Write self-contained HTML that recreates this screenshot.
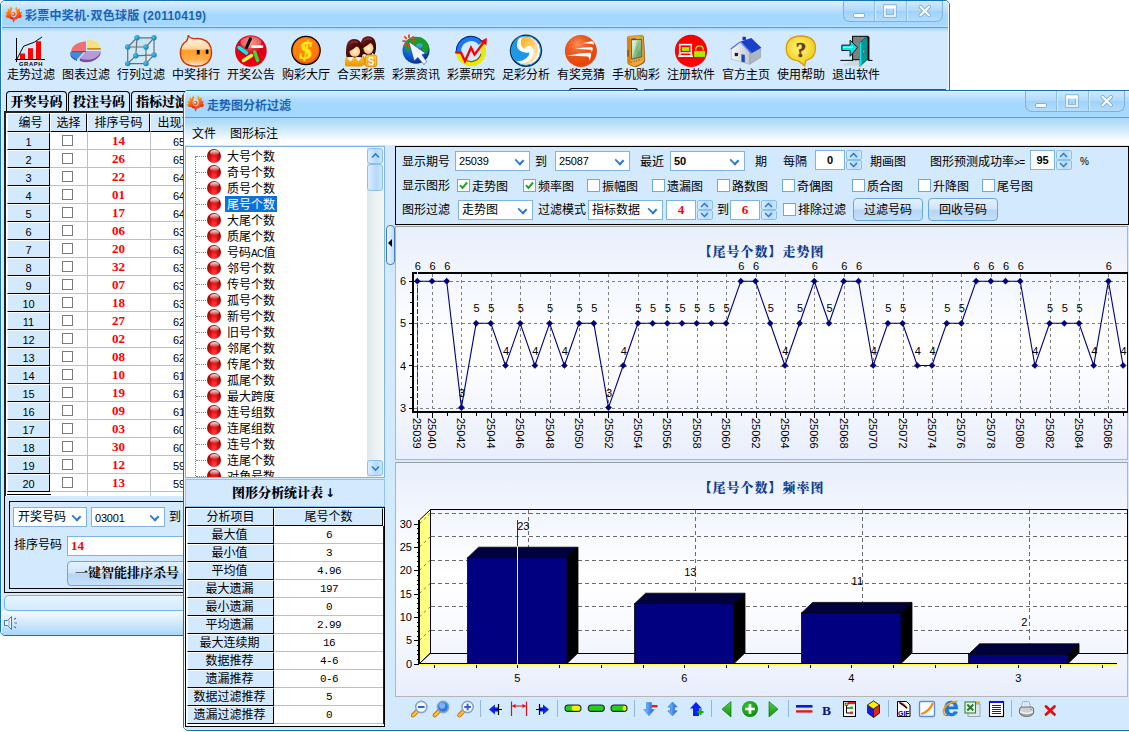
<!DOCTYPE html>
<html lang="zh-CN"><head><meta charset="utf-8"><title>彩票中奖机</title>
<style>
html,body{margin:0;padding:0}
body{width:1129px;height:732px;overflow:hidden;position:relative;background:#fff;
 font-family:"Liberation Sans","Noto Sans CJK SC",sans-serif;font-size:12px;color:#000;line-height:1}
.a{position:absolute}
.t{position:absolute;white-space:nowrap;line-height:14px;height:14px}
.c{text-align:center}
.mono{font-family:"Liberation Mono","Noto Sans CJK SC",monospace}
.serif{font-family:"Liberation Serif","Noto Serif CJK SC",serif}
/* windows */
#w1{box-shadow:inset 1px 0 0 #fff,inset -1px 0 0 #fff;left:0;top:0;width:948px;height:634px;border:1px solid #1672b0;border-radius:5px 5px 5px 5px;background:#d3e9fd;overflow:hidden}
#w1 .tb{left:0;top:0;width:948px;height:26px;background:linear-gradient(#fff 0,#fff 1px,#d8edfe 1px,#b4dcfd 11px,#a5d8fd 14px,#a5d8fd 24px,#b4e0fd 25px,#b4e0fd 26px);border-bottom:1px solid #5a9fdc}
#w1 .tb2{left:0;top:27px;width:948px;height:4px;background:linear-gradient(#9fd6fc,#d3e9fd)}
#w2{box-shadow:inset 1px 0 0 #fff;left:183px;top:90px;width:960px;height:639px;border:1px solid #1672b0;border-radius:5px 5px 5px 5px;background:#d3e9fd;overflow:hidden}
#w2 .tb{left:0;top:0;width:960px;height:26px;background:linear-gradient(#fff 0,#fff 1px,#d4ebfe 1px,#b0dbfd 9px,#a5d8fd 12px,#a5d8fd 100%);border-bottom:1px solid #5a9fdc}
#w2 .mb{left:0;top:27px;width:960px;height:27px;background:linear-gradient(#a8dafc 0,#b2dcf6 15%,#d8ecfb 50%,#fbfdff 85%,#fdfeff 100%)}
.ttl{font-weight:bold;color:#1a63b5;font-size:13px}
.cap{border:1px solid #7fb2dd;border-top:none;border-radius:0 0 7px 7px;background:linear-gradient(#d4eafd,#b0dafc 50%,#a0d2fa 55%,#b4dcfc)}
.tab{border:1px solid #000;border-bottom:none;border-radius:4px 4px 0 0;box-sizing:border-box;background:#d3e9fd}
.hd{background:#d3e9fd;box-sizing:border-box;border-top:1px solid #fff;border-left:1px solid #fff;border-right:1px solid #000;border-bottom:1px solid #000}
.gl{background:#c0c0c0}
.cb{width:11px;height:11px;box-sizing:border-box;border:1px solid #7b7b7b;background:#fff}
.combo{box-sizing:border-box;border:1px solid #7eb4e2;background:#fff}
.combo:after{content:"";position:absolute;right:6px;top:5px;width:5px;height:5px;border-right:2px solid #2a7ad0;border-bottom:2px solid #2a7ad0;transform:rotate(45deg) scale(1.1,0.9);transform-origin:center}
.btn{box-sizing:border-box;border:1px solid #6aa7da;border-radius:4px;background:linear-gradient(#e4f1fd 0,#d2e7fb 45%,#b5d6f5 55%,#c6e0f8 100%)}
.ball{width:14px;height:14px;border-radius:50%;background:radial-gradient(ellipse at 50% 88%,#ff4a4a 0,#ee1a1a 30%,#b00a0a 62%,#7a0000 100%)}
.ball:after{content:"";position:absolute;left:2.5px;top:0.8px;width:9px;height:5px;border-radius:50%;background:linear-gradient(rgba(255,255,255,.9),rgba(255,200,200,.15))}
.sbb{box-sizing:border-box;border:1px solid #86c1f0;border-radius:3px;background:linear-gradient(90deg,#dcedfd,#b6d9f8 60%,#cfe6fb)}
.cb2{width:13px;height:13px;box-sizing:border-box;border:1px solid #6fa9dc;background:#fff}
.nb:after{display:none}

</style></head>
<body>
<div id="w1" class="a">
<div class="tb a"></div><div class="tb2 a"></div>
<svg class="a" style="left:4px;top:5px" width="18" height="17" viewBox="0 0 17 16"><defs><linearGradient id="lga" x1="0" y1="0" x2="0.5" y2="1"><stop offset="0" stop-color="#ffd21a"/><stop offset="0.45" stop-color="#ff7a10"/><stop offset="1" stop-color="#ee1208"/></linearGradient><linearGradient id="lha" x1="1" y1="0" x2="0.5" y2="1"><stop offset="0" stop-color="#ffd21a"/><stop offset="0.45" stop-color="#ff7a10"/><stop offset="1" stop-color="#ee1208"/></linearGradient></defs><path d="M8.2 15.6 L7.2 12.8 L5.4 12.6 L3.8 11.4 L1.8 11.4 L0 9.2 L1.6 8.4 L0.4 5.4 L2.2 6 L2.8 1.8 L4.3 3.4 L5.6 0.4 L7 2.6 L5.9 4.2 L5.2 7.4 L6 9.6 L8 10.8 L9 13.5z" fill="url(#lga)"/><path d="M8.2 15.6 L7.2 12.8 L5.4 12.6 L3.8 11.4 L1.8 11.4 L0 9.2 L1.6 8.4 L0.4 5.4 L2.2 6 L2.8 1.8 L4.3 3.4 L5.6 0.4 L7 2.6 L5.9 4.2 L5.2 7.4 L6 9.6 L8 10.8 L9 13.5z" fill="url(#lha)" transform="translate(16.4,0) scale(-1,1)"/><circle cx="8" cy="7.6" r="2" fill="#f8501a"/><circle cx="7.6" cy="7.2" r="0.9" fill="#fff2e0"/></svg>
<div class="t ttl" style="left:24px;top:8px;font-size:12px;letter-spacing:0.25px">彩票中奖机·双色球版 (20110419)</div>
<div class="a cap" style="left:842px;top:-1px;width:98px;height:21px"></div><div class="a" style="left:873px;top:0px;width:1px;height:20px;background:#8fbfe6"></div><div class="a" style="left:874px;top:0px;width:1px;height:20px;background:#d9ecfd"></div><div class="a" style="left:905px;top:0px;width:1px;height:20px;background:#8fbfe6"></div><div class="a" style="left:906px;top:0px;width:1px;height:20px;background:#d9ecfd"></div><svg class="a" style="left:842px;top:-1px" width="98" height="21" viewBox="0 0 98 21"><rect x="10.5" y="13.5" width="11" height="4" rx="1.5" fill="#fff" stroke="#7fb0dc" stroke-width="1"/><rect x="42" y="6" width="10" height="10" fill="none" stroke="#7fb0dc" stroke-width="3.4"/><rect x="42" y="6" width="10" height="10" fill="none" stroke="#fff" stroke-width="1.6"/><path d="M41.2 7.3 H52.8" stroke="#fff" stroke-width="2.6"/><path d="M77.5 6.8 L86 15.2 M86 6.8 L77.5 15.2" stroke="#7fb0dc" stroke-width="4" stroke-linecap="round"/><path d="M77.5 6.8 L86 15.2 M86 6.8 L77.5 15.2" stroke="#fff" stroke-width="2.1" stroke-linecap="round"/></svg>
<div class="t" style="left:6px;top:67px;width:48px">走势过滤</div>
<div class="t" style="left:61px;top:67px;width:48px">图表过滤</div>
<div class="t" style="left:116px;top:67px;width:48px">行列过滤</div>
<div class="t" style="left:171px;top:67px;width:48px">中奖排行</div>
<div class="t" style="left:226px;top:67px;width:48px">开奖公告</div>
<div class="t" style="left:281px;top:67px;width:48px">购彩大厅</div>
<div class="t" style="left:336px;top:67px;width:48px">合买彩票</div>
<div class="t" style="left:391px;top:67px;width:48px">彩票资讯</div>
<div class="t" style="left:446px;top:67px;width:48px">彩票研究</div>
<div class="t" style="left:501px;top:67px;width:48px">足彩分析</div>
<div class="t" style="left:556px;top:67px;width:48px">有奖竞猜</div>
<div class="t" style="left:611px;top:67px;width:48px">手机购彩</div>
<div class="t" style="left:666px;top:67px;width:48px">注册软件</div>
<div class="t" style="left:721px;top:67px;width:48px">官方主页</div>
<div class="t" style="left:776px;top:67px;width:48px">使用帮助</div>
<div class="t" style="left:831px;top:67px;width:48px">退出软件</div>
<svg class="a" style="left:-1px;top:29px" width="949" height="40" viewBox="0 30 949 40">
<defs><radialGradient id="g5" cx="0.5" cy="0.25" r="0.8"><stop offset="0" stop-color="#f08070"/><stop offset="0.45" stop-color="#d80020"/><stop offset="1" stop-color="#f00000"/></radialGradient><radialGradient id="g6" cx="0.45" cy="0.4" r="0.65"><stop offset="0" stop-color="#ff9a10"/><stop offset="0.7" stop-color="#ff7000"/><stop offset="1" stop-color="#e03800"/></radialGradient><linearGradient id="g4" x1="0" y1="0" x2="0" y2="1"><stop offset="0" stop-color="#fff4e6"/><stop offset="0.42" stop-color="#ffd9a8"/><stop offset="0.5" stop-color="#ff9a20"/><stop offset="0.8" stop-color="#ffb050"/><stop offset="1" stop-color="#fff0e0"/></linearGradient><radialGradient id="gn" cx="0.35" cy="0.35" r="0.7"><stop offset="0" stop-color="#4fc0ee"/><stop offset="1" stop-color="#0a7fb8"/></radialGradient><radialGradient id="g8" cx="0.35" cy="0.3" r="0.8"><stop offset="0" stop-color="#3a90f0"/><stop offset="0.6" stop-color="#0a55c8"/><stop offset="1" stop-color="#062a78"/></radialGradient><radialGradient id="g11" cx="0.4" cy="0.3" r="0.8"><stop offset="0" stop-color="#f89060"/><stop offset="0.35" stop-color="#ee5a20"/><stop offset="0.8" stop-color="#e64408"/><stop offset="1" stop-color="#ec5818"/></radialGradient><radialGradient id="g15" cx="0.45" cy="0.4" r="0.7"><stop offset="0" stop-color="#fff27a"/><stop offset="0.7" stop-color="#f2d428"/><stop offset="1" stop-color="#e8b818"/></radialGradient><radialGradient id="gf" cx="0.5" cy="0.5" r="0.6"><stop offset="0" stop-color="#fff6e0"/><stop offset="1" stop-color="#ffb860"/></radialGradient><linearGradient id="gh" x1="0" y1="0" x2="1" y2="1"><stop offset="0" stop-color="#7a2020"/><stop offset="0.5" stop-color="#4a0c0c"/><stop offset="1" stop-color="#2a0404"/></linearGradient><linearGradient id="gb" x1="0" y1="0" x2="0" y2="1"><stop offset="0" stop-color="#ffc020"/><stop offset="1" stop-color="#e89000"/></linearGradient><linearGradient id="g10" x1="0" y1="0" x2="1" y2="1"><stop offset="0" stop-color="#ffb010"/><stop offset="1" stop-color="#fff0d8"/></linearGradient><linearGradient id="gs" x1="0" y1="0" x2="1" y2="1"><stop offset="0" stop-color="#c8ecc8"/><stop offset="1" stop-color="#5a9a5a"/></linearGradient><linearGradient id="gw" x1="0" y1="0" x2="1" y2="0"><stop offset="0" stop-color="#f6f8fa"/><stop offset="1" stop-color="#c2c8d0"/></linearGradient></defs>
<g><path d="M20 53.5h5v6h-5z M28 48.3h5v11.2h-5z M36 41.2h5v18.3h-5z" fill="#f00"/><path d="M16.5 38 V62 M15 59.5 H45" stroke="#000" stroke-width="1" fill="none" shape-rendering="crispEdges"/><path d="M17 59 L23.6 46.2 L34.3 42.2 L42 37" stroke="#000" stroke-width="1" fill="none"/><text x="31" y="66" text-anchor="middle" font-family="Liberation Sans, sans-serif" font-weight="bold" font-size="5.8" letter-spacing="0.65">GRAPH</text></g>
<g><path d="M80 61 Q88 64 95 60 Q101 56 100.5 53 L100.5 51 L86.5 51.5 L79.5 59z" fill="#7a4aa8"/><path d="M86.5 51 L100.5 51 Q100 56 94 58.5 Q88 61 80 58.5z" fill="#b89ad8"/><path d="M70.2 52 L84 51.8 L77 59.5 Q71 57 70.2 52z" fill="#3a8ae8"/><path d="M70.2 52 Q70.5 56 77 59.5 L77 61 Q70 58 70.2 53.5z" fill="#1a5ab8"/><path d="M86 41.2 L86 51 L71.2 51 Q72 43 86 41.2z" fill="#f07070"/><path d="M71.2 51 L86 51 L86 52.3 L71.4 52.3z" fill="#c03838"/><path d="M87.2 39.3 L87.2 48 L100.8 48 Q99 40 87.2 39.3z" fill="#f8e080"/><path d="M87.2 48 L100.8 48 L100.8 49.8 L87.2 49.8z" fill="#c88820"/></g>
<g><polygon points="127.7,47 146,47 146,63.6 127.7,63.6" fill="#c8e8f4" fill-opacity="0.75"/><polygon points="137,37.8 154,37.8 146,47 127.7,47" fill="#c0e4f0" fill-opacity="0.8"/><polygon points="146,47 154,37.8 154,54.9 146,63.6" fill="#d4eef8" fill-opacity="0.8"/>
<path d="M127.7 47.0 L146.0 47.0 M146.0 47.0 L146.0 63.6 M146.0 63.6 L127.7 63.6 M127.7 63.6 L127.7 47.0 M137.0 37.8 L154.0 37.8 M154.0 37.8 L154.0 54.9 M154.0 54.9 L135.8 55.8 M135.8 55.8 L137.0 37.8 M127.7 47.0 L137.0 37.8 M146.0 47.0 L154.0 37.8 M146.0 63.6 L154.0 54.9 M127.7 63.6 L135.8 55.8" stroke="#6e6e6e" stroke-width="1.2" fill="none"/>
<circle cx="137.0" cy="37.8" r="2.7" fill="url(#gn)"/>
<circle cx="154.0" cy="37.8" r="2.7" fill="url(#gn)"/>
<circle cx="154.0" cy="54.9" r="2.7" fill="url(#gn)"/>
<circle cx="135.8" cy="55.8" r="2.7" fill="url(#gn)"/>
<circle cx="127.7" cy="47.0" r="2.7" fill="url(#gn)"/>
<circle cx="146.0" cy="47.0" r="2.7" fill="url(#gn)"/>
<circle cx="146.0" cy="63.6" r="2.7" fill="url(#gn)"/>
<circle cx="127.7" cy="63.6" r="2.7" fill="url(#gn)"/>
</g>
<g><path d="M188.2 35.3 Q189.8 38.6 194.5 38.8 Q198 38 201.5 39 Q211.6 41.8 211.6 52.5 Q211 66 196 66.2 Q180.5 66 180.4 52.5 Q180.6 44.5 186.6 41 Q188.2 38.6 188.2 35.3z" fill="url(#g4)" stroke="#cc3604" stroke-width="1.4"/><rect x="196.8" y="50" width="2.8" height="4.4" fill="#000"/><rect x="205.8" y="49.6" width="2.6" height="4.2" fill="#000"/></g>
<g><circle cx="250.9" cy="51" r="15.8" fill="url(#g5)"/><ellipse cx="251" cy="42.5" rx="10.5" ry="5.5" fill="#ffb0a0" fill-opacity="0.45"/><path d="M246.5 47.5 L250.4 38.8" stroke="#000" stroke-width="3" stroke-linecap="round"/><path d="M252.5 46.6 L262 46.6" stroke="#fff" stroke-width="2.6" stroke-linecap="round"/><path d="M239 47.5 L246.5 53" stroke="#00f0f0" stroke-width="3.5" stroke-linecap="round"/><path d="M243.5 60.5 L251.5 55.5" stroke="#f8f840" stroke-width="3.4" stroke-linecap="round"/><path d="M254.8 52.2 L257.6 60.4" stroke="#30e030" stroke-width="3.4" stroke-linecap="round"/></g>
<g><circle cx="306" cy="50.5" r="14.2" fill="url(#g6)" stroke="#000" stroke-width="1.2"/><circle cx="306" cy="50.5" r="11.2" fill="none" stroke="#ff9a30" stroke-width="0.7"/><text x="306" y="59.2" text-anchor="middle" font-family="Liberation Serif, serif" font-weight="bold" font-style="italic" font-size="25" fill="#ffe818" stroke="#ffe818" stroke-width="0.5">$</text></g>
<g><path d="M360.2 50 Q359.8 36.4 368 36.2 Q376.4 36.4 376 48 Q375.8 52 374.4 54.8 L361.5 54.8 Q360.3 52.5 360.2 50z" fill="url(#gh)"/><rect x="362.4" y="55.5" width="4" height="9.5" fill="#f09a08"/><path d="M362.8 54.2 L365.6 54.6 L365.4 58.6z M372.4 53 L374.4 54.8 L371.6 55z" fill="#fff"/><ellipse cx="368.4" cy="48.3" rx="5" ry="5.7" fill="url(#gf)"/><path d="M362.2 48.4 Q367.5 46.4 372.6 40.6 Q374.6 43.5 374.8 49.5 L375.8 49.5 Q376.3 38 368 37 Q361.5 38 362.2 48.4z" fill="url(#gh)"/><path d="M364 40.5 Q368 37.5 372 39.5" stroke="#9a3030" stroke-width="1.4" fill="none" stroke-opacity="0.8"/><path d="M346 53 Q345.6 39.2 354 39 Q362.6 39.2 362.6 51 Q362.4 55.5 361.8 58 L346.8 58 Q346.1 55.5 346 53z" fill="url(#gh)"/><ellipse cx="354.8" cy="51.4" rx="5.3" ry="5.4" fill="url(#gf)"/><path d="M348.4 51.6 Q354 49.4 359.2 43.4 Q361.2 46.5 361.4 52.5 L362.4 52.5 Q362.8 41 354 40 Q347.5 41 348.4 51.6z" fill="url(#gh)"/><path d="M350 43.5 Q354 40.5 358 42.5" stroke="#9a3030" stroke-width="1.4" fill="none" stroke-opacity="0.8"/><path d="M344.9 60 Q344.9 57.6 348 57.6 L360.5 57.6 Q363.4 57.6 363.4 60 L363.4 64.3 Q363.4 66.6 360.8 66.6 L347.6 66.6 Q344.9 66.6 344.9 64.3z" fill="url(#gb)"/><path d="M346.9 57.2 L354 57.2 L350.4 61.6z M355.2 57.2 L361.8 57.2 L358.4 61.3z" fill="#fff"/><rect x="365.4" y="55.1" width="11.4" height="11.6" rx="2.2" fill="url(#gb)" stroke="#e68a00" stroke-width="0.8"/><rect x="366.6" y="56.3" width="9" height="9.2" rx="1.4" fill="none" stroke="#ffd858" stroke-width="0.7"/><text x="371.1" y="65" text-anchor="middle" font-family="Liberation Sans, sans-serif" font-weight="bold" font-size="10" fill="#f4fbff">S</text></g>
<g><circle cx="416" cy="50.2" r="13.5" fill="url(#g8)"/><path d="M404.2 45.5 Q405.5 40 411 37.8 Q416 36.2 421 37.5 Q427 40 429 46.5 Q428.8 51 426.5 54.5 Q423 52.5 421.5 48.5 Q418 46.5 414 47 Q410 48 408.8 52 Q405.5 51 404.2 45.5z" fill="#1c9c24"/><ellipse cx="419.5" cy="45.5" rx="3.2" ry="2.2" fill="#38a8f4" fill-opacity="0.85"/><path d="M412.2 41.1 L415.6 41.1 M411.3 43.4 L413.7 45.8 M409.0 44.3 L409.0 47.7 M406.7 43.4 L404.3 45.8 M405.8 41.1 L402.4 41.1 M406.7 38.8 L404.3 36.4 M409.0 37.9 L409.0 34.5 M411.3 38.8 L413.7 36.4" stroke="#ff3a12" stroke-width="1.8" fill="none"/><path d="M408.7 41.6 L425.6 53.3 L422 54.8 L426.6 61.6 L424 64.7 L417.8 57.4 L414.2 61z" fill="#eef4ff" stroke="#20409a" stroke-width="0.6"/></g>
<g><path d="M458.5 51.2 A12.5 12.5 0 0 1 480.9 43.5" fill="none" stroke="#1a78f0" stroke-width="5.2"/><path d="M456.2 50.7 A14.8 14.8 0 0 1 482.0 41.3" fill="none" stroke="#0a2a80" stroke-width="1.1"/><path d="M480.9 43.5 A12.5 12.5 0 1 1 458.5 51.2" fill="none" stroke="#ece808" stroke-width="5.2"/><path d="M480.9 53.8 A10.2 10.2 0 0 1 465.1 59.6" fill="none" stroke="#6a6a00" stroke-width="1.2"/><path d="M455.2 52.3 L460.9 52.5 L465 61.2 L471 47.8 L474.6 54.6 L484.2 41.6" fill="none" stroke="#f80000" stroke-width="2.4" stroke-linejoin="miter"/><path d="M486.9 38 L486.4 45.4 L480.6 41z" fill="#f80000"/></g>
<g><circle cx="526" cy="50.7" r="15.4" fill="#fff" stroke="#0c3060" stroke-width="1.6"/><circle cx="526" cy="50.7" r="14.5" fill="none" stroke="#2a9ae8" stroke-width="1"/><path d="M521 35.8 A15.2 15.2 0 0 0 515.9 60.8 Q524 62.4 529 55 L529 52.4 Q521.6 53.6 517.9 48.6 Q515 42.4 521 35.8z" fill="#1a9ae6"/><path d="M521.6 38.8 Q523.5 36.8 526 36.6 A14.2 14.2 0 0 1 529 64 Q525 64.8 520.5 63.9 Q530.4 62.6 533.5 54.8 Q535 49 530.9 46.5 Q526.8 45 524.2 49.1 Q520.6 46.5 520.8 42.4 Q520.8 40 521.6 38.8z" fill="url(#g10)"/></g>
<g><circle cx="580.9" cy="51" r="16" fill="url(#g11)"/><path d="M582.3 43.3 Q588 41.8 592.1 41.3 Q593.6 41.6 593.7 42.8 Q593.9 44 593.4 45.2 Q593 43.9 591.6 43.8 Q587 43.6 582.3 43.3z M575 48.7 Q584 47 591.6 47 Q592.8 47.4 592.7 48.8 Q592.6 50.6 591.6 52.4 Q591.6 50 590.4 49.7 Q583 49 575 48.7z M567 55.7 Q580 53 590.1 52.8 Q591.3 53.4 591.1 55 Q590.8 58 589.3 61 Q589.4 57.2 587.8 56.5 Q578 56 567 55.7z" fill="#fff"/></g>
<g><path d="M628.2 38 L643.8 36.2 L645.2 60.8 Q645 63 641.8 64.6 L636.6 66.9 Q635 67.2 633.6 66.6 L629.2 64.8z" fill="#4a2c06" fill-opacity="0.75"/><path d="M627.4 37.2 Q627.4 36.6 628.5 36.4 L642 35.2 Q643.2 35.2 643.3 36.4 L644.4 60.5 Q644.2 62.4 641 64 L636 66.2 Q634.5 66.6 633 66 L628.6 64.2 Q627.7 63.8 627.7 62.8z" fill="#f6a62c" stroke="#b86a08" stroke-width="0.6"/><path d="M627.4 37.2 L630.3 38 L630.5 64.6 L628.6 64.2 Q627.7 63.8 627.7 62.8z" fill="#de7e0c"/><path d="M628 50 V56.5" stroke="#5a3806" stroke-width="1"/><path d="M631.3 39.8 L641.7 39.3 L641.7 56.9 L631.6 59.2z" fill="url(#gs)" stroke="#3c4c30" stroke-width="0.8"/><path d="M639.6 39.6 L635.2 51.4 L641.5 50.6 V56.6 L635.8 58z" fill="#5f9f64" fill-opacity="0.5"/><path d="M632 40.4 L636.8 40.2 L633 56 L632.2 58.4z" fill="#f0fff0" fill-opacity="0.5"/><path d="M631.3 39.2 L635.8 38.9" stroke="#1c1cb0" stroke-width="0.9"/><rect x="639.8" y="36.2" width="2" height="1.1" fill="#30e030"/><path d="M630.8 62.4 L641.6 59.4" stroke="#7a6a90" stroke-width="1.3" stroke-dasharray="1.4,1.3"/></g>
<g><circle cx="691" cy="50.9" r="16.1" fill="#f00"/><rect x="679.7" y="44.6" width="11.6" height="8.4" fill="none" stroke="#fff" stroke-width="1.5"/><rect x="681.9" y="47" width="7.3" height="3.9" fill="#a4f000"/><path d="M679 53.3 H692 L693 56.9 H678z" fill="#fff"/><path d="M681.4 53.4 H689.6 L690.8 55 H680.2z" fill="#f00"/><rect x="694.1" y="50.9" width="10.9" height="6" fill="#a4f000"/><path d="M695.6 50.6 Q695.6 45.8 699.5 45.8 Q703.4 45.8 703.4 50.6" fill="none" stroke="#a4f000" stroke-width="1.3"/></g>
<g><path d="M740.1 42.2 L731.3 49.4 L731.3 59.2 L749.9 64.3 L749.9 53.4z" fill="url(#gw)" stroke="#98a0ac" stroke-width="0.5"/><path d="M749.9 53.4 L760.6 48.5 L760.6 57.5 L749.9 64.3z" fill="#aeb6c0" stroke="#8890a0" stroke-width="0.5"/><rect x="742.5" y="36.8" width="3.4" height="3.4" fill="#1838b0"/><path d="M751.3 38 L761.4 47.8 L750.6 53.8 L739.8 41.8z" fill="#1840c8"/><path d="M740 41.2 L730.2 48.6 L731 49.8 L740.4 42.6 L750.3 53.6 L751 52.6z" fill="#2a52d8" stroke="#e8ecf4" stroke-width="0.5"/><rect x="734.3" y="52.7" width="3.9" height="3.6" fill="#181c24" stroke="#f4f4f4" stroke-width="0.6"/><path d="M741.1 53.8 L745.2 54.8 L745.2 63 L741.1 61.9z" fill="#1a4aa8" stroke="#f0f0f0" stroke-width="0.5"/></g>
<g><path d="M800.9 36 Q815.5 36.4 815.5 48.4 Q815.3 58 806 60.4 L804.6 65.8 L798.5 60.9 Q786.4 59.5 786.3 48.4 Q786.5 36.4 800.9 36z" fill="url(#g15)" stroke="#d89c10" stroke-width="1.3"/><text x="801" y="56.8" text-anchor="middle" font-family="Liberation Serif, serif" font-weight="bold" font-size="21" fill="#683a10" stroke="#683a10" stroke-width="0.5">?</text></g>
<g><path d="M842 65 l12 -5 h14 l-10 6z" fill="#c8c8c8" fill-opacity="0.55"/><path d="M840.4 60.4 H853 M868.2 60.4 H872.5" stroke="#000" stroke-width="1"/><rect x="852.6" y="36.3" width="15.6" height="23.4" fill="#808080" stroke="#000" stroke-width="1"/><path d="M868.6 37 V60" stroke="#000" stroke-width="1.6"/><path d="M859.9 42.4 L867.4 36.4 L867.4 59.4 L859.9 66.4z" fill="#009a9a" stroke="#003838" stroke-width="0.6"/><path d="M860.4 42.4 V66" stroke="#00f0f0" stroke-width="1.6"/><ellipse cx="863.9" cy="51.7" rx="0.9" ry="1.4" fill="#fff" stroke="#000" stroke-width="0.5"/><path d="M841.8 45.1 H850.1 V40.2 L857.4 47.6 L850.1 56.3 V50.5 H841.8z" fill="#00e8e8" stroke="#000" stroke-width="0.9"/><path d="M843.5 47.4 H853" stroke="#c8ffff" stroke-width="1.2"/></g>
</svg>
<div class="a" style="left:568px;top:87px;width:69px;height:8px;border:1px solid #000;border-bottom:none;border-radius:3px 3px 0 0;box-sizing:border-box"></div>
<div class="a" style="left:643px;top:88px;width:302px;height:1px;background:#0a7a1e"></div>
<div class="a tab" style="left:5px;top:90px;width:61px;height:21px"></div>
<div class="t serif" style="left:5px;top:94px;width:61px;text-align:center;font-weight:900;font-size:13px">开奖号码</div>
<div class="a tab" style="left:67px;top:90px;width:62px;height:21px"></div>
<div class="t serif" style="left:67px;top:94px;width:62px;text-align:center;font-weight:900;font-size:13px">投注号码</div>
<div class="a tab" style="left:130px;top:90px;width:62px;height:21px"></div>
<div class="t serif" style="left:130px;top:94px;width:62px;text-align:center;font-weight:900;font-size:13px">指标过滤</div>
<div class="a" style="left:3px;top:110px;width:600px;height:385px;background:#fff;border-left:2px solid #222;border-top:2px solid #222"></div>
<div class="a hd" style="left:6px;top:112px;width:43px;height:19px"></div>
<div class="t c" style="left:8px;top:115px;width:43px">编号</div>
<div class="a hd" style="left:49px;top:112px;width:37px;height:19px"></div>
<div class="t c" style="left:49px;top:115px;width:37px">选择</div>
<div class="a hd" style="left:86px;top:112px;width:63px;height:19px"></div>
<div class="t c" style="left:86px;top:115px;width:63px">排序号码</div>
<div class="a hd" style="left:149px;top:112px;width:63px;height:19px"></div>
<div class="t c" style="left:149px;top:115px;width:63px">出现次数</div>
<div class="a hd" style="left:6px;top:131px;width:43px;height:18px"></div>
<div class="t c" style="left:6px;top:134px;width:43px;font-size:11px">1</div>
<div class="a gl" style="left:49px;top:148px;width:560px;height:1px"></div>
<div class="a cb" style="left:61px;top:134px"></div>
<div class="t c serif" style="left:86px;top:133px;width:63px;color:#f00;font-weight:bold;font-size:13px">14</div>
<div class="t" style="left:172px;top:134px;font-size:11px">65</div>
<div class="a hd" style="left:6px;top:149px;width:43px;height:18px"></div>
<div class="t c" style="left:6px;top:152px;width:43px;font-size:11px">2</div>
<div class="a gl" style="left:49px;top:166px;width:560px;height:1px"></div>
<div class="a cb" style="left:61px;top:152px"></div>
<div class="t c serif" style="left:86px;top:151px;width:63px;color:#f00;font-weight:bold;font-size:13px">26</div>
<div class="t" style="left:172px;top:152px;font-size:11px">65</div>
<div class="a hd" style="left:6px;top:167px;width:43px;height:18px"></div>
<div class="t c" style="left:6px;top:170px;width:43px;font-size:11px">3</div>
<div class="a gl" style="left:49px;top:184px;width:560px;height:1px"></div>
<div class="a cb" style="left:61px;top:170px"></div>
<div class="t c serif" style="left:86px;top:169px;width:63px;color:#f00;font-weight:bold;font-size:13px">22</div>
<div class="t" style="left:172px;top:170px;font-size:11px">64</div>
<div class="a hd" style="left:6px;top:185px;width:43px;height:18px"></div>
<div class="t c" style="left:6px;top:188px;width:43px;font-size:11px">4</div>
<div class="a gl" style="left:49px;top:202px;width:560px;height:1px"></div>
<div class="a cb" style="left:61px;top:188px"></div>
<div class="t c serif" style="left:86px;top:187px;width:63px;color:#f00;font-weight:bold;font-size:13px">01</div>
<div class="t" style="left:172px;top:188px;font-size:11px">64</div>
<div class="a hd" style="left:6px;top:203px;width:43px;height:18px"></div>
<div class="t c" style="left:6px;top:206px;width:43px;font-size:11px">5</div>
<div class="a gl" style="left:49px;top:220px;width:560px;height:1px"></div>
<div class="a cb" style="left:61px;top:206px"></div>
<div class="t c serif" style="left:86px;top:205px;width:63px;color:#f00;font-weight:bold;font-size:13px">17</div>
<div class="t" style="left:172px;top:206px;font-size:11px">64</div>
<div class="a hd" style="left:6px;top:221px;width:43px;height:18px"></div>
<div class="t c" style="left:6px;top:224px;width:43px;font-size:11px">6</div>
<div class="a gl" style="left:49px;top:238px;width:560px;height:1px"></div>
<div class="a cb" style="left:61px;top:224px"></div>
<div class="t c serif" style="left:86px;top:223px;width:63px;color:#f00;font-weight:bold;font-size:13px">06</div>
<div class="t" style="left:172px;top:224px;font-size:11px">63</div>
<div class="a hd" style="left:6px;top:239px;width:43px;height:18px"></div>
<div class="t c" style="left:6px;top:242px;width:43px;font-size:11px">7</div>
<div class="a gl" style="left:49px;top:256px;width:560px;height:1px"></div>
<div class="a cb" style="left:61px;top:242px"></div>
<div class="t c serif" style="left:86px;top:241px;width:63px;color:#f00;font-weight:bold;font-size:13px">20</div>
<div class="t" style="left:172px;top:242px;font-size:11px">63</div>
<div class="a hd" style="left:6px;top:257px;width:43px;height:18px"></div>
<div class="t c" style="left:6px;top:260px;width:43px;font-size:11px">8</div>
<div class="a gl" style="left:49px;top:274px;width:560px;height:1px"></div>
<div class="a cb" style="left:61px;top:260px"></div>
<div class="t c serif" style="left:86px;top:259px;width:63px;color:#f00;font-weight:bold;font-size:13px">32</div>
<div class="t" style="left:172px;top:260px;font-size:11px">63</div>
<div class="a hd" style="left:6px;top:275px;width:43px;height:18px"></div>
<div class="t c" style="left:6px;top:278px;width:43px;font-size:11px">9</div>
<div class="a gl" style="left:49px;top:292px;width:560px;height:1px"></div>
<div class="a cb" style="left:61px;top:278px"></div>
<div class="t c serif" style="left:86px;top:277px;width:63px;color:#f00;font-weight:bold;font-size:13px">07</div>
<div class="t" style="left:172px;top:278px;font-size:11px">63</div>
<div class="a hd" style="left:6px;top:293px;width:43px;height:18px"></div>
<div class="t c" style="left:6px;top:296px;width:43px;font-size:11px">10</div>
<div class="a gl" style="left:49px;top:310px;width:560px;height:1px"></div>
<div class="a cb" style="left:61px;top:296px"></div>
<div class="t c serif" style="left:86px;top:295px;width:63px;color:#f00;font-weight:bold;font-size:13px">18</div>
<div class="t" style="left:172px;top:296px;font-size:11px">63</div>
<div class="a hd" style="left:6px;top:311px;width:43px;height:18px"></div>
<div class="t c" style="left:6px;top:314px;width:43px;font-size:11px">11</div>
<div class="a gl" style="left:49px;top:328px;width:560px;height:1px"></div>
<div class="a cb" style="left:61px;top:314px"></div>
<div class="t c serif" style="left:86px;top:313px;width:63px;color:#f00;font-weight:bold;font-size:13px">27</div>
<div class="t" style="left:172px;top:314px;font-size:11px">62</div>
<div class="a hd" style="left:6px;top:329px;width:43px;height:18px"></div>
<div class="t c" style="left:6px;top:332px;width:43px;font-size:11px">12</div>
<div class="a gl" style="left:49px;top:346px;width:560px;height:1px"></div>
<div class="a cb" style="left:61px;top:332px"></div>
<div class="t c serif" style="left:86px;top:331px;width:63px;color:#f00;font-weight:bold;font-size:13px">02</div>
<div class="t" style="left:172px;top:332px;font-size:11px">62</div>
<div class="a hd" style="left:6px;top:347px;width:43px;height:18px"></div>
<div class="t c" style="left:6px;top:350px;width:43px;font-size:11px">13</div>
<div class="a gl" style="left:49px;top:364px;width:560px;height:1px"></div>
<div class="a cb" style="left:61px;top:350px"></div>
<div class="t c serif" style="left:86px;top:349px;width:63px;color:#f00;font-weight:bold;font-size:13px">08</div>
<div class="t" style="left:172px;top:350px;font-size:11px">62</div>
<div class="a hd" style="left:6px;top:365px;width:43px;height:18px"></div>
<div class="t c" style="left:6px;top:368px;width:43px;font-size:11px">14</div>
<div class="a gl" style="left:49px;top:382px;width:560px;height:1px"></div>
<div class="a cb" style="left:61px;top:368px"></div>
<div class="t c serif" style="left:86px;top:367px;width:63px;color:#f00;font-weight:bold;font-size:13px">10</div>
<div class="t" style="left:172px;top:368px;font-size:11px">61</div>
<div class="a hd" style="left:6px;top:383px;width:43px;height:18px"></div>
<div class="t c" style="left:6px;top:386px;width:43px;font-size:11px">15</div>
<div class="a gl" style="left:49px;top:400px;width:560px;height:1px"></div>
<div class="a cb" style="left:61px;top:386px"></div>
<div class="t c serif" style="left:86px;top:385px;width:63px;color:#f00;font-weight:bold;font-size:13px">19</div>
<div class="t" style="left:172px;top:386px;font-size:11px">61</div>
<div class="a hd" style="left:6px;top:401px;width:43px;height:18px"></div>
<div class="t c" style="left:6px;top:404px;width:43px;font-size:11px">16</div>
<div class="a gl" style="left:49px;top:418px;width:560px;height:1px"></div>
<div class="a cb" style="left:61px;top:404px"></div>
<div class="t c serif" style="left:86px;top:403px;width:63px;color:#f00;font-weight:bold;font-size:13px">09</div>
<div class="t" style="left:172px;top:404px;font-size:11px">61</div>
<div class="a hd" style="left:6px;top:419px;width:43px;height:18px"></div>
<div class="t c" style="left:6px;top:422px;width:43px;font-size:11px">17</div>
<div class="a gl" style="left:49px;top:436px;width:560px;height:1px"></div>
<div class="a cb" style="left:61px;top:422px"></div>
<div class="t c serif" style="left:86px;top:421px;width:63px;color:#f00;font-weight:bold;font-size:13px">03</div>
<div class="t" style="left:172px;top:422px;font-size:11px">60</div>
<div class="a hd" style="left:6px;top:437px;width:43px;height:18px"></div>
<div class="t c" style="left:6px;top:440px;width:43px;font-size:11px">18</div>
<div class="a gl" style="left:49px;top:454px;width:560px;height:1px"></div>
<div class="a cb" style="left:61px;top:440px"></div>
<div class="t c serif" style="left:86px;top:439px;width:63px;color:#f00;font-weight:bold;font-size:13px">30</div>
<div class="t" style="left:172px;top:440px;font-size:11px">60</div>
<div class="a hd" style="left:6px;top:455px;width:43px;height:18px"></div>
<div class="t c" style="left:6px;top:458px;width:43px;font-size:11px">19</div>
<div class="a gl" style="left:49px;top:472px;width:560px;height:1px"></div>
<div class="a cb" style="left:61px;top:458px"></div>
<div class="t c serif" style="left:86px;top:457px;width:63px;color:#f00;font-weight:bold;font-size:13px">12</div>
<div class="t" style="left:172px;top:458px;font-size:11px">59</div>
<div class="a hd" style="left:6px;top:473px;width:43px;height:18px"></div>
<div class="t c" style="left:6px;top:476px;width:43px;font-size:11px">20</div>
<div class="a gl" style="left:49px;top:490px;width:560px;height:1px"></div>
<div class="a cb" style="left:61px;top:476px"></div>
<div class="t c serif" style="left:86px;top:475px;width:63px;color:#f00;font-weight:bold;font-size:13px">13</div>
<div class="t" style="left:172px;top:476px;font-size:11px">59</div>
<div class="a gl" style="left:86px;top:131px;width:1px;height:364px"></div>
<div class="a gl" style="left:149px;top:131px;width:1px;height:364px"></div>
<div class="a gl" style="left:212px;top:131px;width:1px;height:364px"></div>
<div class="a" style="left:6px;top:493px;width:44px;height:1px;background:#000"></div>
<div class="a" style="left:3px;top:495px;width:700px;height:96px;background:#d3e9fd;border-left:1px solid #000;border-bottom:1px solid #000"></div>
<div class="a" style="left:8px;top:500px;width:700px;height:88px;border:1px solid #000;box-sizing:border-box"></div>
<div class="a combo" style="left:12px;top:506px;width:74px;height:20px"></div><div class="t" style="left:17px;top:509px">开奖号码</div>
<div class="a combo" style="left:90px;top:506px;width:74px;height:20px"></div><div class="t" style="left:94px;top:510px;font-size:11px;letter-spacing:-0.2px">03001</div>
<div class="t" style="left:168px;top:509px">到</div>
<div class="t" style="left:13px;top:537px">排序号码</div>
<div class="a" style="left:66px;top:535px;width:300px;height:20px;background:#fff;border:1px solid #7eb4e2;box-sizing:border-box"></div>
<div class="t serif" style="left:70px;top:538px;color:#f00;font-weight:bold;font-size:13px">14</div>
<div class="a btn" style="left:66px;top:560px;width:300px;height:25px"></div>
<div class="t serif" style="left:74px;top:565px;font-weight:bold;font-size:13px">一键智能排序杀号</div>
<div class="a" style="left:0;top:610px;width:948px;height:24px;background:linear-gradient(#f6fbff 0,#e4f2fe 25%,#c2e2fa 70%,#a8d6f8 100%)"></div>
<div class="a" style="left:3px;top:594px;width:900px;height:16px;border:1px solid #6cb8f2;border-radius:5px;box-sizing:border-box;background:linear-gradient(#e6f3fe,#d6ebfd)"></div>
<svg class="a" style="left:2px;top:613px" width="18" height="18" viewBox="0 0 18 18"><path d="M1.5 6.5h3l4-4v13l-4-4h-3z" fill="#f4f9ff" stroke="#3a78c0" stroke-width="1"/><path d="M6 5.5v7" stroke="#9fc0e8" stroke-width="1.5"/><path d="M11 5.5l2-1.5M11.5 9h2.5M11 12.5l2 1.5" stroke="#3a78c0" stroke-width="1.1" fill="none"/></svg>
<div class="a" style="left:0;top:2px;width:1px;height:630px;background:#f4faff"></div><div class="a" style="left:947px;top:2px;width:1px;height:630px;background:#f4faff"></div>
</div>
<div id="w2" class="a">
<div class="tb a"></div><div class="mb a"></div>
<div class="a" style="left:-184px;top:-91px;width:0;height:0">
<svg class="a" style="left:187px;top:95px" width="18" height="17" viewBox="0 0 17 16"><defs><linearGradient id="lgb" x1="0" y1="0" x2="0.5" y2="1"><stop offset="0" stop-color="#ffd21a"/><stop offset="0.45" stop-color="#ff7a10"/><stop offset="1" stop-color="#ee1208"/></linearGradient><linearGradient id="lhb" x1="1" y1="0" x2="0.5" y2="1"><stop offset="0" stop-color="#ffd21a"/><stop offset="0.45" stop-color="#ff7a10"/><stop offset="1" stop-color="#ee1208"/></linearGradient></defs><path d="M8.2 15.6 L7.2 12.8 L5.4 12.6 L3.8 11.4 L1.8 11.4 L0 9.2 L1.6 8.4 L0.4 5.4 L2.2 6 L2.8 1.8 L4.3 3.4 L5.6 0.4 L7 2.6 L5.9 4.2 L5.2 7.4 L6 9.6 L8 10.8 L9 13.5z" fill="url(#lgb)"/><path d="M8.2 15.6 L7.2 12.8 L5.4 12.6 L3.8 11.4 L1.8 11.4 L0 9.2 L1.6 8.4 L0.4 5.4 L2.2 6 L2.8 1.8 L4.3 3.4 L5.6 0.4 L7 2.6 L5.9 4.2 L5.2 7.4 L6 9.6 L8 10.8 L9 13.5z" fill="url(#lhb)" transform="translate(16.4,0) scale(-1,1)"/><circle cx="8" cy="7.6" r="2" fill="#f8501a"/><circle cx="7.6" cy="7.2" r="0.9" fill="#fff2e0"/></svg>
<div class="t ttl" style="left:207px;top:99px;font-size:12px">走势图分析过滤</div>
<div class="t" style="left:192px;top:127px">文件</div><div class="t" style="left:230px;top:127px">图形标注</div>
<div class="a cap" style="left:1025px;top:90px;width:98px;height:21px"></div><div class="a" style="left:1056px;top:91px;width:1px;height:20px;background:#8fbfe6"></div><div class="a" style="left:1057px;top:91px;width:1px;height:20px;background:#d9ecfd"></div><div class="a" style="left:1088px;top:91px;width:1px;height:20px;background:#8fbfe6"></div><div class="a" style="left:1089px;top:91px;width:1px;height:20px;background:#d9ecfd"></div><svg class="a" style="left:1025px;top:90px" width="98" height="21" viewBox="0 0 98 21"><rect x="10.5" y="13.5" width="11" height="4" rx="1.5" fill="#fff" stroke="#7fb0dc" stroke-width="1"/><rect x="42" y="6" width="10" height="10" fill="none" stroke="#7fb0dc" stroke-width="3.4"/><rect x="42" y="6" width="10" height="10" fill="none" stroke="#fff" stroke-width="1.6"/><path d="M41.2 7.3 H52.8" stroke="#fff" stroke-width="2.6"/><path d="M77.5 6.8 L86 15.2 M86 6.8 L77.5 15.2" stroke="#7fb0dc" stroke-width="4" stroke-linecap="round"/><path d="M77.5 6.8 L86 15.2 M86 6.8 L77.5 15.2" stroke="#fff" stroke-width="2.1" stroke-linecap="round"/></svg>
<div class="a" style="left:185px;top:146px;width:200px;height:332px;background:#fff;border:1px solid #7eb4e2;box-sizing:border-box;overflow:hidden">
<div class="a" style="left:-186px;top:-147px;width:0;height:0">
<div class="a" style="left:195px;top:156px;width:0;height:330px;border-left:1px dotted #808080"></div>
<div class="a" style="left:196px;top:156px;width:10px;height:0;border-top:1px dotted #808080"></div>
<div class="a ball" style="left:207px;top:149px"></div>
<div class="t" style="left:227px;top:150px">大号个数</div>
<div class="a" style="left:196px;top:172px;width:10px;height:0;border-top:1px dotted #808080"></div>
<div class="a ball" style="left:207px;top:165px"></div>
<div class="t" style="left:227px;top:166px">奇号个数</div>
<div class="a" style="left:196px;top:188px;width:10px;height:0;border-top:1px dotted #808080"></div>
<div class="a ball" style="left:207px;top:181px"></div>
<div class="t" style="left:227px;top:182px">质号个数</div>
<div class="a" style="left:196px;top:204px;width:10px;height:0;border-top:1px dotted #808080"></div>
<div class="a ball" style="left:207px;top:197px"></div>
<div class="a" style="left:225px;top:196px;width:52px;height:16px;background:#0c72d8"></div>
<div class="t" style="left:227px;top:198px;color:#fff">尾号个数</div>
<div class="a" style="left:196px;top:220px;width:10px;height:0;border-top:1px dotted #808080"></div>
<div class="a ball" style="left:207px;top:213px"></div>
<div class="t" style="left:227px;top:214px">大尾个数</div>
<div class="a" style="left:196px;top:236px;width:10px;height:0;border-top:1px dotted #808080"></div>
<div class="a ball" style="left:207px;top:229px"></div>
<div class="t" style="left:227px;top:230px">质尾个数</div>
<div class="a" style="left:196px;top:252px;width:10px;height:0;border-top:1px dotted #808080"></div>
<div class="a ball" style="left:207px;top:245px"></div>
<div class="t" style="left:227px;top:246px">号码<span style="font-size:10px;letter-spacing:-0.7px">AC</span>值</div>
<div class="a" style="left:196px;top:268px;width:10px;height:0;border-top:1px dotted #808080"></div>
<div class="a ball" style="left:207px;top:261px"></div>
<div class="t" style="left:227px;top:262px">邻号个数</div>
<div class="a" style="left:196px;top:284px;width:10px;height:0;border-top:1px dotted #808080"></div>
<div class="a ball" style="left:207px;top:277px"></div>
<div class="t" style="left:227px;top:278px">传号个数</div>
<div class="a" style="left:196px;top:300px;width:10px;height:0;border-top:1px dotted #808080"></div>
<div class="a ball" style="left:207px;top:293px"></div>
<div class="t" style="left:227px;top:294px">孤号个数</div>
<div class="a" style="left:196px;top:316px;width:10px;height:0;border-top:1px dotted #808080"></div>
<div class="a ball" style="left:207px;top:309px"></div>
<div class="t" style="left:227px;top:310px">新号个数</div>
<div class="a" style="left:196px;top:332px;width:10px;height:0;border-top:1px dotted #808080"></div>
<div class="a ball" style="left:207px;top:325px"></div>
<div class="t" style="left:227px;top:326px">旧号个数</div>
<div class="a" style="left:196px;top:348px;width:10px;height:0;border-top:1px dotted #808080"></div>
<div class="a ball" style="left:207px;top:341px"></div>
<div class="t" style="left:227px;top:342px">邻尾个数</div>
<div class="a" style="left:196px;top:364px;width:10px;height:0;border-top:1px dotted #808080"></div>
<div class="a ball" style="left:207px;top:357px"></div>
<div class="t" style="left:227px;top:358px">传尾个数</div>
<div class="a" style="left:196px;top:380px;width:10px;height:0;border-top:1px dotted #808080"></div>
<div class="a ball" style="left:207px;top:373px"></div>
<div class="t" style="left:227px;top:374px">孤尾个数</div>
<div class="a" style="left:196px;top:396px;width:10px;height:0;border-top:1px dotted #808080"></div>
<div class="a ball" style="left:207px;top:389px"></div>
<div class="t" style="left:227px;top:390px">最大跨度</div>
<div class="a" style="left:196px;top:412px;width:10px;height:0;border-top:1px dotted #808080"></div>
<div class="a ball" style="left:207px;top:405px"></div>
<div class="t" style="left:227px;top:406px">连号组数</div>
<div class="a" style="left:196px;top:428px;width:10px;height:0;border-top:1px dotted #808080"></div>
<div class="a ball" style="left:207px;top:421px"></div>
<div class="t" style="left:227px;top:422px">连尾组数</div>
<div class="a" style="left:196px;top:444px;width:10px;height:0;border-top:1px dotted #808080"></div>
<div class="a ball" style="left:207px;top:437px"></div>
<div class="t" style="left:227px;top:438px">连号个数</div>
<div class="a" style="left:196px;top:460px;width:10px;height:0;border-top:1px dotted #808080"></div>
<div class="a ball" style="left:207px;top:453px"></div>
<div class="t" style="left:227px;top:454px">连尾个数</div>
<div class="a" style="left:196px;top:476px;width:10px;height:0;border-top:1px dotted #808080"></div>
<div class="a ball" style="left:207px;top:469px"></div>
<div class="t" style="left:227px;top:470px">对角号数</div>
<div class="a" style="left:367px;top:147px;width:17px;height:330px;background:linear-gradient(90deg,#dde6ea,#ecf1f3 50%,#f3f6f7)"></div>
<div class="a sbb" style="left:367px;top:148px;width:16px;height:16px"></div>
<svg class="a" style="left:371px;top:152px" width="9" height="7" viewBox="0 0 9 7"><path d="M1 5.5 L4.5 2 L8 5.5" stroke="#2a7ad0" stroke-width="1.6" fill="none"/></svg>
<div class="a sbb" style="left:367px;top:164px;width:16px;height:27px"></div>
<div class="a sbb" style="left:367px;top:460px;width:16px;height:16px"></div>
<svg class="a" style="left:371px;top:465px" width="9" height="7" viewBox="0 0 9 7"><path d="M1 1.5 L4.5 5 L8 1.5" stroke="#2a7ad0" stroke-width="1.6" fill="none"/></svg>
</div></div>
<div class="a" style="left:185px;top:479px;width:200px;height:28px;background:#d3e9fd;border:1px solid #8fc4ee;box-sizing:border-box"></div>
<div class="t serif" style="left:232px;top:486px;font-weight:900;font-size:13px">图形分析统计表<span style="font-family:'DejaVu Sans',sans-serif;font-weight:bold;font-size:12px;padding-left:2px">↓</span></div>
<div class="a" style="left:185px;top:507px;width:200px;height:220px;background:#fff;border:1px solid #000;box-sizing:border-box"></div>
<div class="a" style="left:274px;top:723px;width:110px;height:1px;background:#10108a"></div><div class="a" style="left:383px;top:526px;width:1px;height:198px;background:#10108a"></div><div class="a" style="left:187px;top:723px;width:87px;height:1px;background:#000"></div>
<div class="a hd" style="left:187px;top:508px;width:87px;height:18px"></div><div class="t c" style="left:187px;top:510px;width:87px">分析项目</div>
<div class="a hd" style="left:274px;top:508px;width:109px;height:18px"></div><div class="t c" style="left:274px;top:510px;width:109px">尾号个数</div>
<div class="a hd" style="left:187px;top:526px;width:87px;height:18px"></div><div class="t c" style="left:186px;top:528px;width:87px">最大值</div>
<div class="a gl" style="left:274px;top:543px;width:109px;height:1px"></div>
<div class="t c mono" style="left:275px;top:528px;width:108px;font-size:11px;letter-spacing:-0.6px">6</div>
<div class="a hd" style="left:187px;top:544px;width:87px;height:18px"></div><div class="t c" style="left:186px;top:546px;width:87px">最小值</div>
<div class="a gl" style="left:274px;top:561px;width:109px;height:1px"></div>
<div class="t c mono" style="left:275px;top:546px;width:108px;font-size:11px;letter-spacing:-0.6px">3</div>
<div class="a hd" style="left:187px;top:562px;width:87px;height:18px"></div><div class="t c" style="left:186px;top:564px;width:87px">平均值</div>
<div class="a gl" style="left:274px;top:579px;width:109px;height:1px"></div>
<div class="t c mono" style="left:275px;top:564px;width:108px;font-size:11px;letter-spacing:-0.6px">4.96</div>
<div class="a hd" style="left:187px;top:580px;width:87px;height:18px"></div><div class="t c" style="left:186px;top:582px;width:87px">最大遗漏</div>
<div class="a gl" style="left:274px;top:597px;width:109px;height:1px"></div>
<div class="t c mono" style="left:275px;top:582px;width:108px;font-size:11px;letter-spacing:-0.6px">197</div>
<div class="a hd" style="left:187px;top:598px;width:87px;height:18px"></div><div class="t c" style="left:186px;top:600px;width:87px">最小遗漏</div>
<div class="a gl" style="left:274px;top:615px;width:109px;height:1px"></div>
<div class="t c mono" style="left:275px;top:600px;width:108px;font-size:11px;letter-spacing:-0.6px">0</div>
<div class="a hd" style="left:187px;top:616px;width:87px;height:18px"></div><div class="t c" style="left:186px;top:618px;width:87px">平均遗漏</div>
<div class="a gl" style="left:274px;top:633px;width:109px;height:1px"></div>
<div class="t c mono" style="left:275px;top:618px;width:108px;font-size:11px;letter-spacing:-0.6px">2.99</div>
<div class="a hd" style="left:187px;top:634px;width:87px;height:18px"></div><div class="t c" style="left:186px;top:636px;width:87px">最大连续期</div>
<div class="a gl" style="left:274px;top:651px;width:109px;height:1px"></div>
<div class="t c mono" style="left:275px;top:636px;width:108px;font-size:11px;letter-spacing:-0.6px">16</div>
<div class="a hd" style="left:187px;top:652px;width:87px;height:18px"></div><div class="t c" style="left:186px;top:654px;width:87px">数据推荐</div>
<div class="a gl" style="left:274px;top:669px;width:109px;height:1px"></div>
<div class="t c mono" style="left:275px;top:654px;width:108px;font-size:11px;letter-spacing:-0.6px">4-6</div>
<div class="a hd" style="left:187px;top:670px;width:87px;height:18px"></div><div class="t c" style="left:186px;top:672px;width:87px">遗漏推荐</div>
<div class="a gl" style="left:274px;top:687px;width:109px;height:1px"></div>
<div class="t c mono" style="left:275px;top:672px;width:108px;font-size:11px;letter-spacing:-0.6px">0-6</div>
<div class="a hd" style="left:187px;top:688px;width:87px;height:18px"></div><div class="t c" style="left:186px;top:690px;width:87px">数据过滤推荐</div>
<div class="a gl" style="left:274px;top:705px;width:109px;height:1px"></div>
<div class="t c mono" style="left:275px;top:690px;width:108px;font-size:11px;letter-spacing:-0.6px">5</div>
<div class="a hd" style="left:187px;top:706px;width:87px;height:18px"></div><div class="t c" style="left:186px;top:708px;width:87px">遗漏过滤推荐</div>
<div class="a gl" style="left:274px;top:723px;width:109px;height:1px"></div>
<div class="t c mono" style="left:275px;top:708px;width:108px;font-size:11px;letter-spacing:-0.6px">0</div>
<div class="a" style="left:386px;top:225px;width:9px;height:40px;border:1px solid #3f7fc4;border-radius:4px;box-sizing:border-box;background:linear-gradient(90deg,#eef6fe,#c3dcf5)"></div>
<div class="a" style="left:388px;top:239px;width:0;height:0;border-right:4px solid #000;border-top:4px solid transparent;border-bottom:4px solid transparent"></div>
<div class="a" style="left:395px;top:146px;width:734px;height:79px;border:1px solid #000;box-sizing:border-box;background:#d3e9fd"></div>
<div class="t" style="left:402px;top:155px;">显示期号</div>
<div class="a combo" style="left:455px;top:151px;width:75px;height:20px"></div>
<div class="t" style="left:459px;top:154px;font-size:11px;letter-spacing:-0.2px">25039</div>
<div class="t" style="left:535px;top:155px;">到</div>
<div class="a combo" style="left:555px;top:151px;width:75px;height:20px"></div>
<div class="t" style="left:559px;top:154px;font-size:11px;letter-spacing:-0.2px">25087</div>
<div class="t" style="left:640px;top:155px;">最近</div>
<div class="a combo" style="left:670px;top:151px;width:75px;height:20px"></div>
<div class="t" style="left:674px;top:154px;font-weight:bold;font-size:11px">50</div>
<div class="t" style="left:755px;top:155px;">期</div>
<div class="t" style="left:783px;top:155px;">每隔</div>
<div class="a combo nb" style="left:815px;top:150px;width:30px;height:20px"></div>
<div class="t c" style="left:815px;top:153px;width:30px;font-weight:bold;font-size:11px;color:#000">0</div>
<div class="a sbb" style="left:846px;top:150px;width:16px;height:10px;border-radius:2px"></div>
<div class="a sbb" style="left:846px;top:160px;width:16px;height:10px;border-radius:2px"></div>
<svg class="a" style="left:849px;top:152px" width="9" height="16" viewBox="0 0 9 16"><path d="M1 5 L4.5 1.5 L8 5 M1 11 L4.5 14.5 L8 11" stroke="#2a7ad0" stroke-width="1.5" fill="none"/></svg>
<div class="t" style="left:870px;top:155px;">期画图</div>
<div class="t" style="left:930px;top:155px;">图形预测成功率<span style="font-size:10px;letter-spacing:-0.5px">&gt;=</span></div>
<div class="a combo nb" style="left:1030px;top:150px;width:25px;height:20px"></div>
<div class="t c" style="left:1030px;top:153px;width:25px;font-weight:bold;font-size:11px;color:#000">95</div>
<div class="a sbb" style="left:1056px;top:150px;width:16px;height:10px;border-radius:2px"></div>
<div class="a sbb" style="left:1056px;top:160px;width:16px;height:10px;border-radius:2px"></div>
<svg class="a" style="left:1059px;top:152px" width="9" height="16" viewBox="0 0 9 16"><path d="M1 5 L4.5 1.5 L8 5 M1 11 L4.5 14.5 L8 11" stroke="#2a7ad0" stroke-width="1.5" fill="none"/></svg>
<div class="t" style="left:1080px;top:155px;font-size:10px">%</div>
<div class="t" style="left:402px;top:179px;">显示图形</div>
<div class="a cb2" style="left:457px;top:179px"></div>
<svg class="a" style="left:457px;top:179px" width="13" height="13" viewBox="0 0 13 13"><path d="M3 6.2 L5.5 9 L10 3.5" stroke="#2aa02a" stroke-width="2" fill="none"/></svg>
<div class="t" style="left:472px;top:180px">走势图</div>
<div class="a cb2" style="left:523px;top:179px"></div>
<svg class="a" style="left:523px;top:179px" width="13" height="13" viewBox="0 0 13 13"><path d="M3 6.2 L5.5 9 L10 3.5" stroke="#2aa02a" stroke-width="2" fill="none"/></svg>
<div class="t" style="left:538px;top:180px">频率图</div>
<div class="a cb2" style="left:587px;top:179px"></div>
<div class="t" style="left:602px;top:180px">振幅图</div>
<div class="a cb2" style="left:652px;top:179px"></div>
<div class="t" style="left:667px;top:180px">遗漏图</div>
<div class="a cb2" style="left:717px;top:179px"></div>
<div class="t" style="left:732px;top:180px">路数图</div>
<div class="a cb2" style="left:782px;top:179px"></div>
<div class="t" style="left:797px;top:180px">奇偶图</div>
<div class="a cb2" style="left:852px;top:179px"></div>
<div class="t" style="left:867px;top:180px">质合图</div>
<div class="a cb2" style="left:918px;top:179px"></div>
<div class="t" style="left:933px;top:180px">升降图</div>
<div class="a cb2" style="left:982px;top:179px"></div>
<div class="t" style="left:997px;top:180px">尾号图</div>
<div class="t" style="left:402px;top:203px;">图形过滤</div>
<div class="a combo" style="left:458px;top:200px;width:75px;height:20px"></div>
<div class="t" style="left:462px;top:203px">走势图</div>
<div class="t" style="left:538px;top:203px;">过滤模式</div>
<div class="a combo" style="left:588px;top:200px;width:75px;height:20px"></div>
<div class="t" style="left:592px;top:203px">指标数据</div>
<div class="a combo nb" style="left:666px;top:200px;width:30px;height:20px"></div>
<div class="t c serif" style="left:666px;top:203px;width:30px;font-weight:bold;font-size:13px;color:#f00">4</div>
<div class="a sbb" style="left:697px;top:200px;width:16px;height:10px;border-radius:2px"></div>
<div class="a sbb" style="left:697px;top:210px;width:16px;height:10px;border-radius:2px"></div>
<svg class="a" style="left:700px;top:202px" width="9" height="16" viewBox="0 0 9 16"><path d="M1 5 L4.5 1.5 L8 5 M1 11 L4.5 14.5 L8 11" stroke="#2a7ad0" stroke-width="1.5" fill="none"/></svg>
<div class="t" style="left:717px;top:203px;">到</div>
<div class="a combo nb" style="left:730px;top:200px;width:30px;height:20px"></div>
<div class="t c serif" style="left:730px;top:203px;width:30px;font-weight:bold;font-size:13px;color:#f00">6</div>
<div class="a sbb" style="left:761px;top:200px;width:16px;height:10px;border-radius:2px"></div>
<div class="a sbb" style="left:761px;top:210px;width:16px;height:10px;border-radius:2px"></div>
<svg class="a" style="left:764px;top:202px" width="9" height="16" viewBox="0 0 9 16"><path d="M1 5 L4.5 1.5 L8 5 M1 11 L4.5 14.5 L8 11" stroke="#2a7ad0" stroke-width="1.5" fill="none"/></svg>
<div class="a cb2" style="left:783px;top:203px"></div>
<div class="t" style="left:798px;top:203px">排除过滤</div>
<div class="a btn" style="left:853px;top:198px;width:70px;height:23px"></div><div class="t c" style="left:853px;top:203px;width:70px">过滤号码</div>
<div class="a btn" style="left:928px;top:198px;width:70px;height:23px"></div><div class="t c" style="left:928px;top:203px;width:70px">回收号码</div>
<div class="a" style="left:395px;top:226px;width:733px;height:234px;box-sizing:border-box;border:1px solid #b5b5b5;border-top-color:#9f9f9f;background:linear-gradient(#e8effc 0,#f4f7fe 25%,#fff 48%,#fdfdff 60%,#e8eefc 100%)"></div>
<svg class="a" style="left:396px;top:227px" width="733" height="232" viewBox="396 227 733 232" font-family="Liberation Sans, sans-serif" font-size="11">
<text x="698.5" y="256" letter-spacing="1" font-family="Liberation Serif, Noto Serif CJK SC, serif" font-weight="900" font-size="13" fill="#123f8c"><tspan font-family="Liberation Sans, Noto Sans CJK SC, sans-serif">【</tspan>尾号个数<tspan font-family="Liberation Sans, Noto Sans CJK SC, sans-serif">】</tspan>走势图</text>
<path d="M414 281.5 H1127 M414 323.5 H1127 M414 366.5 H1127 M414 408.5 H1127 M417.5 274 V411 M432.5 274 V411 M461.5 274 V411 M491.5 274 V411 M520.5 274 V411 M550.5 274 V411 M579.5 274 V411 M608.5 274 V411 M638.5 274 V411 M667.5 274 V411 M697.5 274 V411 M726.5 274 V411 M756.5 274 V411 M785.5 274 V411 M814.5 274 V411 M844.5 274 V411 M873.5 274 V411 M903.5 274 V411 M932.5 274 V411 M961.5 274 V411 M991.5 274 V411 M1020.5 274 V411 M1050.5 274 V411 M1079.5 274 V411 M1108.5 274 V411" stroke="#7f7f7f" stroke-width="1" stroke-dasharray="3,3" fill="none" shape-rendering="crispEdges"/>
<path d="M413 272 V413 M412 412 H1128" stroke="#000" stroke-width="2" fill="none" shape-rendering="crispEdges"/>
<path d="M412 273 H1128 M1127.5 273 V412" stroke="#000" stroke-width="1.4" fill="none" shape-rendering="crispEdges"/>
<path d="M409 408.5 H412 M410 397.5 H412 M410 387.5 H412 M410 376.5 H412 M409 365.5 H412 M410 355.5 H412 M410 344.5 H412 M410 334.5 H412 M409 323.5 H412 M410 313.5 H412 M410 302.5 H412 M410 292.5 H412 M409 281.5 H412 M417.5 413 V418 M432.5 413 V418 M447.5 413 V416 M461.5 413 V418 M476.5 413 V416 M491.5 413 V418 M506.5 413 V416 M520.5 413 V418 M535.5 413 V416 M550.5 413 V418 M564.5 413 V416 M579.5 413 V418 M594.5 413 V416 M608.5 413 V418 M623.5 413 V416 M638.5 413 V418 M653.5 413 V416 M667.5 413 V418 M682.5 413 V416 M697.5 413 V418 M711.5 413 V416 M726.5 413 V418 M741.5 413 V416 M756.5 413 V418 M770.5 413 V416 M785.5 413 V418 M800.5 413 V416 M814.5 413 V418 M829.5 413 V416 M844.5 413 V418 M858.5 413 V416 M873.5 413 V418 M888.5 413 V416 M903.5 413 V418 M917.5 413 V416 M932.5 413 V418 M947.5 413 V416 M961.5 413 V418 M976.5 413 V416 M991.5 413 V418 M1006.5 413 V416 M1020.5 413 V418 M1035.5 413 V416 M1050.5 413 V418 M1064.5 413 V416 M1079.5 413 V418 M1094.5 413 V416 M1108.5 413 V418 M1123.5 413 V416" stroke="#000" stroke-width="1" fill="none" shape-rendering="crispEdges"/>
<path d="M417.5 274 V411" stroke="#1a1aff" stroke-width="1" stroke-dasharray="5,2" shape-rendering="crispEdges"/><path d="M417.5 272 V285" stroke="#ffff40" stroke-width="1" shape-rendering="crispEdges"/>
<polyline points="417.3,281.2 432.0,281.2 446.7,281.2 461.4,407.6 476.1,323.3 490.8,323.3 505.5,365.5 520.2,323.3 534.9,365.5 549.6,323.3 564.4,365.5 579.1,323.3 593.8,323.3 608.5,407.6 623.2,365.5 637.9,323.3 652.6,323.3 667.3,323.3 682.0,323.3 696.7,323.3 711.4,323.3 726.1,323.3 740.8,281.2 755.5,281.2 770.2,323.3 784.9,365.5 799.6,323.3 814.3,281.2 829.0,323.3 843.7,281.2 858.5,281.2 873.2,365.5 887.9,323.3 902.6,323.3 917.3,365.5 932.0,365.5 946.7,323.3 961.4,323.3 976.1,281.2 990.8,281.2 1005.5,281.2 1020.2,281.2 1034.9,365.5 1049.6,323.3 1064.3,323.3 1079.0,323.3 1093.7,365.5 1108.4,281.2 1123.1,365.5" fill="none" stroke="#000080" stroke-width="1.1"/>
<path d="M417.3 278.1 l3.1 3.1 l-3.1 3.1 l-3.1 -3.1z M432.0 278.1 l3.1 3.1 l-3.1 3.1 l-3.1 -3.1z M446.7 278.1 l3.1 3.1 l-3.1 3.1 l-3.1 -3.1z M461.4 404.5 l3.1 3.1 l-3.1 3.1 l-3.1 -3.1z M476.1 320.2 l3.1 3.1 l-3.1 3.1 l-3.1 -3.1z M490.8 320.2 l3.1 3.1 l-3.1 3.1 l-3.1 -3.1z M505.5 362.4 l3.1 3.1 l-3.1 3.1 l-3.1 -3.1z M520.2 320.2 l3.1 3.1 l-3.1 3.1 l-3.1 -3.1z M534.9 362.4 l3.1 3.1 l-3.1 3.1 l-3.1 -3.1z M549.6 320.2 l3.1 3.1 l-3.1 3.1 l-3.1 -3.1z M564.4 362.4 l3.1 3.1 l-3.1 3.1 l-3.1 -3.1z M579.1 320.2 l3.1 3.1 l-3.1 3.1 l-3.1 -3.1z M593.8 320.2 l3.1 3.1 l-3.1 3.1 l-3.1 -3.1z M608.5 404.5 l3.1 3.1 l-3.1 3.1 l-3.1 -3.1z M623.2 362.4 l3.1 3.1 l-3.1 3.1 l-3.1 -3.1z M637.9 320.2 l3.1 3.1 l-3.1 3.1 l-3.1 -3.1z M652.6 320.2 l3.1 3.1 l-3.1 3.1 l-3.1 -3.1z M667.3 320.2 l3.1 3.1 l-3.1 3.1 l-3.1 -3.1z M682.0 320.2 l3.1 3.1 l-3.1 3.1 l-3.1 -3.1z M696.7 320.2 l3.1 3.1 l-3.1 3.1 l-3.1 -3.1z M711.4 320.2 l3.1 3.1 l-3.1 3.1 l-3.1 -3.1z M726.1 320.2 l3.1 3.1 l-3.1 3.1 l-3.1 -3.1z M740.8 278.1 l3.1 3.1 l-3.1 3.1 l-3.1 -3.1z M755.5 278.1 l3.1 3.1 l-3.1 3.1 l-3.1 -3.1z M770.2 320.2 l3.1 3.1 l-3.1 3.1 l-3.1 -3.1z M784.9 362.4 l3.1 3.1 l-3.1 3.1 l-3.1 -3.1z M799.6 320.2 l3.1 3.1 l-3.1 3.1 l-3.1 -3.1z M814.3 278.1 l3.1 3.1 l-3.1 3.1 l-3.1 -3.1z M829.0 320.2 l3.1 3.1 l-3.1 3.1 l-3.1 -3.1z M843.7 278.1 l3.1 3.1 l-3.1 3.1 l-3.1 -3.1z M858.5 278.1 l3.1 3.1 l-3.1 3.1 l-3.1 -3.1z M873.2 362.4 l3.1 3.1 l-3.1 3.1 l-3.1 -3.1z M887.9 320.2 l3.1 3.1 l-3.1 3.1 l-3.1 -3.1z M902.6 320.2 l3.1 3.1 l-3.1 3.1 l-3.1 -3.1z M917.3 362.4 l3.1 3.1 l-3.1 3.1 l-3.1 -3.1z M932.0 362.4 l3.1 3.1 l-3.1 3.1 l-3.1 -3.1z M946.7 320.2 l3.1 3.1 l-3.1 3.1 l-3.1 -3.1z M961.4 320.2 l3.1 3.1 l-3.1 3.1 l-3.1 -3.1z M976.1 278.1 l3.1 3.1 l-3.1 3.1 l-3.1 -3.1z M990.8 278.1 l3.1 3.1 l-3.1 3.1 l-3.1 -3.1z M1005.5 278.1 l3.1 3.1 l-3.1 3.1 l-3.1 -3.1z M1020.2 278.1 l3.1 3.1 l-3.1 3.1 l-3.1 -3.1z M1034.9 362.4 l3.1 3.1 l-3.1 3.1 l-3.1 -3.1z M1049.6 320.2 l3.1 3.1 l-3.1 3.1 l-3.1 -3.1z M1064.3 320.2 l3.1 3.1 l-3.1 3.1 l-3.1 -3.1z M1079.0 320.2 l3.1 3.1 l-3.1 3.1 l-3.1 -3.1z M1093.7 362.4 l3.1 3.1 l-3.1 3.1 l-3.1 -3.1z M1108.4 278.1 l3.1 3.1 l-3.1 3.1 l-3.1 -3.1z M1123.1 362.4 l3.1 3.1 l-3.1 3.1 l-3.1 -3.1z" fill="#000080" stroke="#00003a" stroke-width="0.4"/>
<text x="406" y="285.2" text-anchor="end">6</text>
<text x="406" y="327.3" text-anchor="end">5</text>
<text x="406" y="369.5" text-anchor="end">4</text>
<text x="406" y="411.6" text-anchor="end">3</text>
<text x="417.8" y="270.2" text-anchor="middle">6</text>
<text x="432.5" y="270.2" text-anchor="middle">6</text>
<text x="447.2" y="270.2" text-anchor="middle">6</text>
<text x="461.9" y="396.6" text-anchor="middle">3</text>
<text x="476.6" y="312.3" text-anchor="middle">5</text>
<text x="491.3" y="312.3" text-anchor="middle">5</text>
<text x="506.0" y="354.5" text-anchor="middle">4</text>
<text x="520.7" y="312.3" text-anchor="middle">5</text>
<text x="535.4" y="354.5" text-anchor="middle">4</text>
<text x="550.1" y="312.3" text-anchor="middle">5</text>
<text x="564.9" y="354.5" text-anchor="middle">4</text>
<text x="579.6" y="312.3" text-anchor="middle">5</text>
<text x="594.3" y="312.3" text-anchor="middle">5</text>
<text x="609.0" y="396.6" text-anchor="middle">3</text>
<text x="623.7" y="354.5" text-anchor="middle">4</text>
<text x="638.4" y="312.3" text-anchor="middle">5</text>
<text x="653.1" y="312.3" text-anchor="middle">5</text>
<text x="667.8" y="312.3" text-anchor="middle">5</text>
<text x="682.5" y="312.3" text-anchor="middle">5</text>
<text x="697.2" y="312.3" text-anchor="middle">5</text>
<text x="711.9" y="312.3" text-anchor="middle">5</text>
<text x="726.6" y="312.3" text-anchor="middle">5</text>
<text x="741.3" y="270.2" text-anchor="middle">6</text>
<text x="756.0" y="270.2" text-anchor="middle">6</text>
<text x="770.7" y="312.3" text-anchor="middle">5</text>
<text x="785.4" y="354.5" text-anchor="middle">4</text>
<text x="800.1" y="312.3" text-anchor="middle">5</text>
<text x="814.8" y="270.2" text-anchor="middle">6</text>
<text x="829.5" y="312.3" text-anchor="middle">5</text>
<text x="844.2" y="270.2" text-anchor="middle">6</text>
<text x="859.0" y="270.2" text-anchor="middle">6</text>
<text x="873.7" y="354.5" text-anchor="middle">4</text>
<text x="888.4" y="312.3" text-anchor="middle">5</text>
<text x="903.1" y="312.3" text-anchor="middle">5</text>
<text x="917.8" y="354.5" text-anchor="middle">4</text>
<text x="932.5" y="354.5" text-anchor="middle">4</text>
<text x="947.2" y="312.3" text-anchor="middle">5</text>
<text x="961.9" y="312.3" text-anchor="middle">5</text>
<text x="976.6" y="270.2" text-anchor="middle">6</text>
<text x="991.3" y="270.2" text-anchor="middle">6</text>
<text x="1006.0" y="270.2" text-anchor="middle">6</text>
<text x="1020.7" y="270.2" text-anchor="middle">6</text>
<text x="1035.4" y="354.5" text-anchor="middle">4</text>
<text x="1050.1" y="312.3" text-anchor="middle">5</text>
<text x="1064.8" y="312.3" text-anchor="middle">5</text>
<text x="1079.5" y="312.3" text-anchor="middle">5</text>
<text x="1094.2" y="354.5" text-anchor="middle">4</text>
<text x="1108.9" y="270.2" text-anchor="middle">6</text>
<text x="1123.6" y="354.5" text-anchor="middle">4</text>
<text transform="translate(413.3,418) rotate(90)">25039</text>
<text transform="translate(428.0,418) rotate(90)">25040</text>
<text transform="translate(457.4,418) rotate(90)">25042</text>
<text transform="translate(486.8,418) rotate(90)">25044</text>
<text transform="translate(516.2,418) rotate(90)">25046</text>
<text transform="translate(545.6,418) rotate(90)">25048</text>
<text transform="translate(575.1,418) rotate(90)">25050</text>
<text transform="translate(604.5,418) rotate(90)">25052</text>
<text transform="translate(633.9,418) rotate(90)">25054</text>
<text transform="translate(663.3,418) rotate(90)">25056</text>
<text transform="translate(692.7,418) rotate(90)">25058</text>
<text transform="translate(722.1,418) rotate(90)">25060</text>
<text transform="translate(751.5,418) rotate(90)">25062</text>
<text transform="translate(780.9,418) rotate(90)">25064</text>
<text transform="translate(810.3,418) rotate(90)">25066</text>
<text transform="translate(839.7,418) rotate(90)">25068</text>
<text transform="translate(869.2,418) rotate(90)">25070</text>
<text transform="translate(898.6,418) rotate(90)">25072</text>
<text transform="translate(928.0,418) rotate(90)">25074</text>
<text transform="translate(957.4,418) rotate(90)">25076</text>
<text transform="translate(986.8,418) rotate(90)">25078</text>
<text transform="translate(1016.2,418) rotate(90)">25080</text>
<text transform="translate(1045.6,418) rotate(90)">25082</text>
<text transform="translate(1075.0,418) rotate(90)">25084</text>
<text transform="translate(1104.4,418) rotate(90)">25086</text>
</svg>
<div class="a" style="left:395px;top:462px;width:733px;height:235px;box-sizing:border-box;border:1px solid #b5b5b5;border-top-color:#9f9f9f;background:linear-gradient(#e8effc 0,#f4f7fe 25%,#fff 48%,#fdfdff 60%,#e8eefc 100%)"></div>
<svg class="a" style="left:396px;top:463px" width="733" height="233" viewBox="396 463 733 233" font-family="Liberation Sans, sans-serif" font-size="11">
<text x="698.5" y="492" letter-spacing="1" font-family="Liberation Serif, Noto Serif CJK SC, serif" font-weight="900" font-size="13" fill="#123f8c"><tspan font-family="Liberation Sans, Noto Sans CJK SC, sans-serif">【</tspan>尾号个数<tspan font-family="Liberation Sans, Noto Sans CJK SC, sans-serif">】</tspan>频率图</text>
<rect x="430.5" y="509.5" width="696.5" height="143.5" fill="none" stroke="#000" stroke-width="1" shape-rendering="crispEdges"/>
<polygon points="419.5,520.0 430.5,509.5 430.5,653.0 419.5,663.5" fill="#ffff80" stroke="#000" stroke-width="1"/>
<polygon points="419.5,663.5 430.5,653.0 1127.0,653.0 1116.5,663.5" fill="none" stroke="none"/>
<path d="M430.5 653.5 H1127.0" stroke="#000" stroke-width="1" shape-rendering="crispEdges"/><path d="M419.5 663.5 L430.5 653.0" stroke="#000" stroke-width="1" fill="none"/>
<path d="M419.5 663.5 H1116.5" stroke="#000" stroke-width="1" shape-rendering="crispEdges"/><path d="M419.5 664.5 H1116.5" stroke="#ffff30" stroke-width="1" shape-rendering="crispEdges"/>
<path d="M430.5 630.5 H1127.0 M430.5 606.5 H1127.0 M430.5 583.5 H1127.0 M430.5 560.5 H1127.0 M430.5 536.5 H1127.0 M430.5 513.5 H1127.0 M528.5 509.5 V653.0 M695.5 509.5 V653.0 M862.5 509.5 V653.0 M1029.5 509.5 V653.0" stroke="#6a6a6a" stroke-width="1" stroke-dasharray="4,3" fill="none" shape-rendering="crispEdges"/>
<path d="M419.5 640.2 L430.5 629.7 M419.5 616.9 L430.5 606.4 M419.5 593.6 L430.5 583.1 M419.5 570.3 L430.5 559.8 M419.5 547.0 L430.5 536.5 M419.5 523.7 L430.5 513.2" stroke="#8a8a50" stroke-width="1" stroke-dasharray="3,3" fill="none"/>
<path d="M419.0 520.0 V663.5" stroke="#000" stroke-width="2" shape-rendering="crispEdges"/>
<path d="M413.5 664.5 H418.5 M416.5 659.5 H418.5 M416.5 654.5 H418.5 M416.5 650.5 H418.5 M416.5 645.5 H418.5 M413.5 640.5 H418.5 M416.5 636.5 H418.5 M416.5 631.5 H418.5 M416.5 626.5 H418.5 M416.5 622.5 H418.5 M413.5 617.5 H418.5 M416.5 612.5 H418.5 M416.5 608.5 H418.5 M416.5 603.5 H418.5 M416.5 598.5 H418.5 M413.5 594.5 H418.5 M416.5 589.5 H418.5 M416.5 584.5 H418.5 M416.5 580.5 H418.5 M416.5 575.5 H418.5 M413.5 570.5 H418.5 M416.5 566.5 H418.5 M416.5 561.5 H418.5 M416.5 556.5 H418.5 M416.5 552.5 H418.5 M413.5 547.5 H418.5 M416.5 542.5 H418.5 M416.5 538.5 H418.5 M416.5 533.5 H418.5 M416.5 528.5 H418.5 M413.5 524.5 H418.5 M434.5 665 V668 M476.5 665 V668 M517.5 665 V668 M559.5 665 V668 M601.5 665 V668 M643.5 665 V668 M684.5 665 V668 M726.5 665 V668 M768.5 665 V668 M810.5 665 V668 M851.5 665 V668 M893.5 665 V668 M935.5 665 V668 M977.5 665 V668 M1018.5 665 V668 M1060.5 665 V668 M1102.5 665 V668" stroke="#000" stroke-width="1" fill="none" shape-rendering="crispEdges"/>
<text x="412" y="667.5" text-anchor="end">0</text>
<text x="412" y="644.2" text-anchor="end">5</text>
<text x="412" y="620.9" text-anchor="end">10</text>
<text x="412" y="597.6" text-anchor="end">15</text>
<text x="412" y="574.3" text-anchor="end">20</text>
<text x="412" y="551.0" text-anchor="end">25</text>
<text x="412" y="527.7" text-anchor="end">30</text>
<polygon points="467.6,557.7 478.6,547.2 578.0,547.2 567.0,557.7" fill="#00003c" stroke="#000" stroke-width="0.8"/>
<polygon points="567.0,557.7 578.0,547.2 578.0,653.0 567.0,663.5" fill="#000" stroke="#000" stroke-width="0.8"/>
<rect x="467.6" y="557.7" width="99.4" height="105.8" fill="#000080" stroke="#000" stroke-width="0.8"/>
<text x="523.3" y="529.7" text-anchor="middle">23</text>
<text x="517.3" y="682" text-anchor="middle">5</text>
<polygon points="634.6,603.7 645.6,593.2 745.0,593.2 734.0,603.7" fill="#00003c" stroke="#000" stroke-width="0.8"/>
<polygon points="734.0,603.7 745.0,593.2 745.0,653.0 734.0,663.5" fill="#000" stroke="#000" stroke-width="0.8"/>
<rect x="634.6" y="603.7" width="99.4" height="59.8" fill="#000080" stroke="#000" stroke-width="0.8"/>
<text x="690.3" y="575.7" text-anchor="middle">13</text>
<text x="684.3" y="682" text-anchor="middle">6</text>
<polygon points="801.6,612.9 812.6,602.4 912.0,602.4 901.0,612.9" fill="#00003c" stroke="#000" stroke-width="0.8"/>
<polygon points="901.0,612.9 912.0,602.4 912.0,653.0 901.0,663.5" fill="#000" stroke="#000" stroke-width="0.8"/>
<rect x="801.6" y="612.9" width="99.4" height="50.6" fill="#000080" stroke="#000" stroke-width="0.8"/>
<text x="857.3" y="584.9" text-anchor="middle">11</text>
<text x="851.3" y="682" text-anchor="middle">4</text>
<polygon points="968.6,654.3 979.6,643.8 1079.0,643.8 1068.0,654.3" fill="#00003c" stroke="#000" stroke-width="0.8"/>
<polygon points="1068.0,654.3 1079.0,643.8 1079.0,653.0 1068.0,663.5" fill="#000" stroke="#000" stroke-width="0.8"/>
<rect x="968.6" y="654.3" width="99.4" height="9.2" fill="#000080" stroke="#000" stroke-width="0.8"/>
<text x="1024.3" y="626.3" text-anchor="middle">2</text>
<text x="1018.3" y="682" text-anchor="middle">3</text>
<path d="M517.5 520 V546" stroke="#1a1aff" stroke-width="1" shape-rendering="crispEdges"/><path d="M517.5 546 V664" stroke="#ffff70" stroke-width="1" shape-rendering="crispEdges"/>
</svg>
<svg class="a" style="left:396px;top:696px" width="733" height="32" viewBox="396 696 733 32">
<defs><linearGradient id="bl" x1="0" y1="0" x2="1" y2="0"><stop offset="0" stop-color="#8fc8ff"/><stop offset="1" stop-color="#0f5fe0"/></linearGradient><radialGradient id="gr" cx="0.4" cy="0.35" r="0.7"><stop offset="0" stop-color="#3bc43b"/><stop offset="1" stop-color="#0a8a0a"/></radialGradient><linearGradient id="gt" x1="0" y1="0" x2="0" y2="1"><stop offset="0" stop-color="#55d23a"/><stop offset="1" stop-color="#0e8e12"/></linearGradient></defs>
<path d="M480.5 700 V717" stroke="#8cb8e2" stroke-width="1" shape-rendering="crispEdges"/>
<path d="M557.5 700 V717" stroke="#8cb8e2" stroke-width="1" shape-rendering="crispEdges"/>
<path d="M634.5 700 V717" stroke="#8cb8e2" stroke-width="1" shape-rendering="crispEdges"/>
<path d="M711.5 700 V717" stroke="#8cb8e2" stroke-width="1" shape-rendering="crispEdges"/>
<path d="M788.5 700 V717" stroke="#8cb8e2" stroke-width="1" shape-rendering="crispEdges"/>
<path d="M888.5 700 V717" stroke="#8cb8e2" stroke-width="1" shape-rendering="crispEdges"/>
<path d="M1011.5 700 V717" stroke="#8cb8e2" stroke-width="1" shape-rendering="crispEdges"/>
<path d="M417.0 711.3 L413.0 715.3" stroke="#b86a00" stroke-width="4.2" stroke-linecap="round"/>
<path d="M417.0 711.3 L413.0 715.3" stroke="#ffc030" stroke-width="2.6" stroke-linecap="round"/>
<circle cx="421.3" cy="707.0" r="5.6" fill="#f6faff" stroke="#8aa4c8" stroke-width="1.6"/>
<path d="M418.0 707.0 H424.6" stroke="#2a66d0" stroke-width="2"/>
<path d="M438.7 711.3 L434.7 715.3" stroke="#b86a00" stroke-width="4.2" stroke-linecap="round"/>
<path d="M438.7 711.3 L434.7 715.3" stroke="#ffc030" stroke-width="2.6" stroke-linecap="round"/>
<circle cx="443.0" cy="707.0" r="5.6" fill="#2d7be0" stroke="#8aa4c8" stroke-width="1.6"/><circle cx="442.2" cy="705.8" r="3" fill="#7db4f4"/>
<path d="M463.3 711.3 L459.3 715.3" stroke="#b86a00" stroke-width="4.2" stroke-linecap="round"/>
<path d="M463.3 711.3 L459.3 715.3" stroke="#ffc030" stroke-width="2.6" stroke-linecap="round"/>
<circle cx="467.6" cy="707.0" r="5.6" fill="#f6faff" stroke="#8aa4c8" stroke-width="1.6"/>
<path d="M464.3 707.0 H470.9" stroke="#2a66d0" stroke-width="2"/>
<path d="M467.6 703.7 V710.3" stroke="#2a66d0" stroke-width="2"/>
<path d="M489 709.5 l6 -5 v3 h4 v4 h-4 v3z" fill="#0a24f0"/><path d="M498.5 704 V715 M494 709.5 H502" stroke="#000" stroke-width="1.2" fill="none"/>
<path d="M511.5 701.5 V716 M526.5 701.5 V716 M512 706 H526" stroke="#e01010" stroke-width="1.2" fill="none"/><path d="M512.5 706 l3 -2.2 v4.4z M525.5 706 l-3 -2.2 v4.4z" fill="#e01010"/>
<path d="M549 709.5 l-6 -5 v3 h-4 v4 h4 v3z" fill="#0a24f0"/><path d="M539.5 704 V715 M536 709.5 H544" stroke="#000" stroke-width="1.2" fill="none"/>
<rect x="565.0" y="705" width="16" height="6.4" rx="3.2" fill="#22d01c" stroke="#202020" stroke-width="1.1"/>
<rect x="571.7" y="705.7" width="8.5" height="5" rx="2" fill="#f4f000"/>
<rect x="588.3" y="705" width="16" height="6.4" rx="3.2" fill="#22d01c" stroke="#202020" stroke-width="1.1"/>
<rect x="611.0" y="705" width="16" height="6.4" rx="3.2" fill="#22d01c" stroke="#202020" stroke-width="1.1"/>
<rect x="622.7" y="705.7" width="3.5" height="5" rx="2" fill="#f4f000"/>
<path d="M646.5 702.5 h5 v7 h2.8 l-5.3 6.3 l-5.3 -6.3 h2.8z" fill="url(#bl)" stroke="#3f86dc" stroke-width="0.6"/><rect x="651.5" y="705" width="6" height="2.4" fill="#e81c10"/>
<path d="M672.5 702 l4.6 5 h-2.6 v3.8 h2.6 l-4.6 5 l-4.6 -5 h2.6 v-3.8 h-2.6z" fill="url(#bl)" stroke="#2f76d0" stroke-width="0.7"/>
<path d="M696 702 l6 6.5 h-3 v7.5 h-6 v-7.5 h-3z" fill="#0a24f0"/><path d="M700.5 709 v6 M697.5 712 h6" stroke="#12b012" stroke-width="2.2"/>
<path d="M731 701.5 V717 L722 709.2z" fill="url(#gt)" stroke="#0b7a10" stroke-width="0.7"/>
<circle cx="750" cy="709" r="8" fill="url(#gr)"/><path d="M745.2 709 H754.8 M750 704.2 V713.8" stroke="#fff" stroke-width="2.6"/>
<path d="M769 701.5 V717 L778 709.2z" fill="url(#gt)" stroke="#0b7a10" stroke-width="0.7"/>
<rect x="796" y="705" width="16.5" height="2.6" fill="#1018d8"/><rect x="796" y="710.2" width="16.5" height="2.4" fill="#e01828"/>
<text x="826.5" y="714.6" text-anchor="middle" font-family="Liberation Serif, serif" font-weight="bold" font-size="13.5" fill="#101080">B</text>
<rect x="843.5" y="701.5" width="12" height="15" fill="#fff" stroke="#000" stroke-width="1"/><rect x="848" y="702" width="7" height="2.2" fill="#e02020"/><path d="M846.5 704 V713 H850 M846.5 708 H850" stroke="#000" stroke-width="1" fill="none"/><rect x="845" y="703" width="3" height="2.6" fill="#e8c000" stroke="#000" stroke-width="0.5"/><rect x="850" y="706.5" width="3" height="2.6" fill="#30b030"/><rect x="850" y="711.5" width="3" height="2.6" fill="#e03030"/>
<path d="M873.5 701 l6 4 v8 l-6 4.5 l-6 -4.5 v-8z" fill="#1a1ad0" stroke="#000" stroke-width="0.6"/><path d="M873.5 701 l6 4 l-6 4 l-6 -4z" fill="#f8f000" stroke="#000" stroke-width="0.5"/><path d="M873.5 709 l6 -4 v8 l-6 4.5z" fill="#e02818" stroke="#000" stroke-width="0.5"/>
<path d="M897.5 701.5 h9 l3.5 3.5 v11.5 h-12.5z" fill="#fff" stroke="#000" stroke-width="1"/><path d="M899 702.5 q5 1 8 6" stroke="#e02020" stroke-width="1.4" fill="none"/><path d="M900 703 l7 5" stroke="#000" stroke-width="1.2"/><text x="903.8" y="715.6" text-anchor="middle" font-family="Liberation Sans, sans-serif" font-weight="bold" font-size="7" fill="#000090">GIF</text>
<rect x="919.5" y="701.5" width="15" height="15" rx="1.5" fill="#fff" stroke="#5f8fd0" stroke-width="1.4"/><path d="M921 714 q8 -2 12 -11" stroke="#f08a18" stroke-width="2.2" fill="none"/><path d="M921 715.2 H933" stroke="#c8d8f0" stroke-width="1"/>
<text x="951" y="716.2" text-anchor="middle" font-family="Liberation Sans, sans-serif" font-weight="bold" font-size="27" fill="#1c7ce4" stroke="#0a50b0" stroke-width="0.4">e</text><path d="M944.2 714.6 Q941.6 708.5 948.5 704 Q953.5 701 957.6 701.4" fill="none" stroke="#f0a010" stroke-width="1.7"/><path d="M944.2 714.6 Q946 716 948.5 715.4" fill="none" stroke="#c07808" stroke-width="1.2"/>
<rect x="968" y="704" width="12" height="12.5" fill="#dfe6ee" stroke="#8a96a6" stroke-width="0.8"/><rect x="973" y="701.5" width="7" height="2.2" fill="#f0a020"/><rect x="965" y="702" width="10.5" height="11" fill="#e8f4e8" stroke="#2f8a3c" stroke-width="1.1"/><path d="M967.3 704.5 l6 6 M973.3 704.5 l-6 6" stroke="#1f7a2c" stroke-width="1.8"/>
<rect x="989.5" y="701.5" width="14" height="15" fill="#fff" stroke="#000" stroke-width="1.1"/><rect x="989" y="701" width="15" height="2" fill="#1010e0"/><path d="M992 705.5 H1001 M992 707.5 H1001 M992 709.5 H1001 M992 711.5 H1001 M992 713.5 H1001" stroke="#1010e0" stroke-width="1" shape-rendering="crispEdges"/>
<path d="M1022.8 701.5 h6 l2 6.5 h-9.6z" fill="#f8fbff" stroke="#8a9ab0" stroke-width="0.7"/><path d="M1024 703 h4 M1023.6 705 h5" stroke="#a8c8f0" stroke-width="0.8"/><path d="M1019.6 709 q0.2 -1.6 2 -2 h10 q1.8 0.4 2 2 v4 q-1.2 3.4 -7 3.4 t-7 -3.4z" fill="#cfcfcf" stroke="#4a4a4a" stroke-width="0.8"/><path d="M1020.4 711.6 q6.2 3.4 12.4 0" stroke="#f6f6f6" stroke-width="1.3" fill="none"/><path d="M1020.4 713.6 q6.2 3.2 12.4 0" stroke="#6a6a6a" stroke-width="0.7" fill="none"/><circle cx="1031.2" cy="709.4" r="0.7" fill="#30c030"/>
<path d="M1046 706.5 L1054.5 714.5 M1054.5 706.5 L1046 714.5" stroke="#e01010" stroke-width="2.8" stroke-linecap="round"/>
</svg>
<div class="a" style="left:184px;top:93px;width:1px;height:636px;background:#eef7ff"></div>
</div></div>
</body></html>
